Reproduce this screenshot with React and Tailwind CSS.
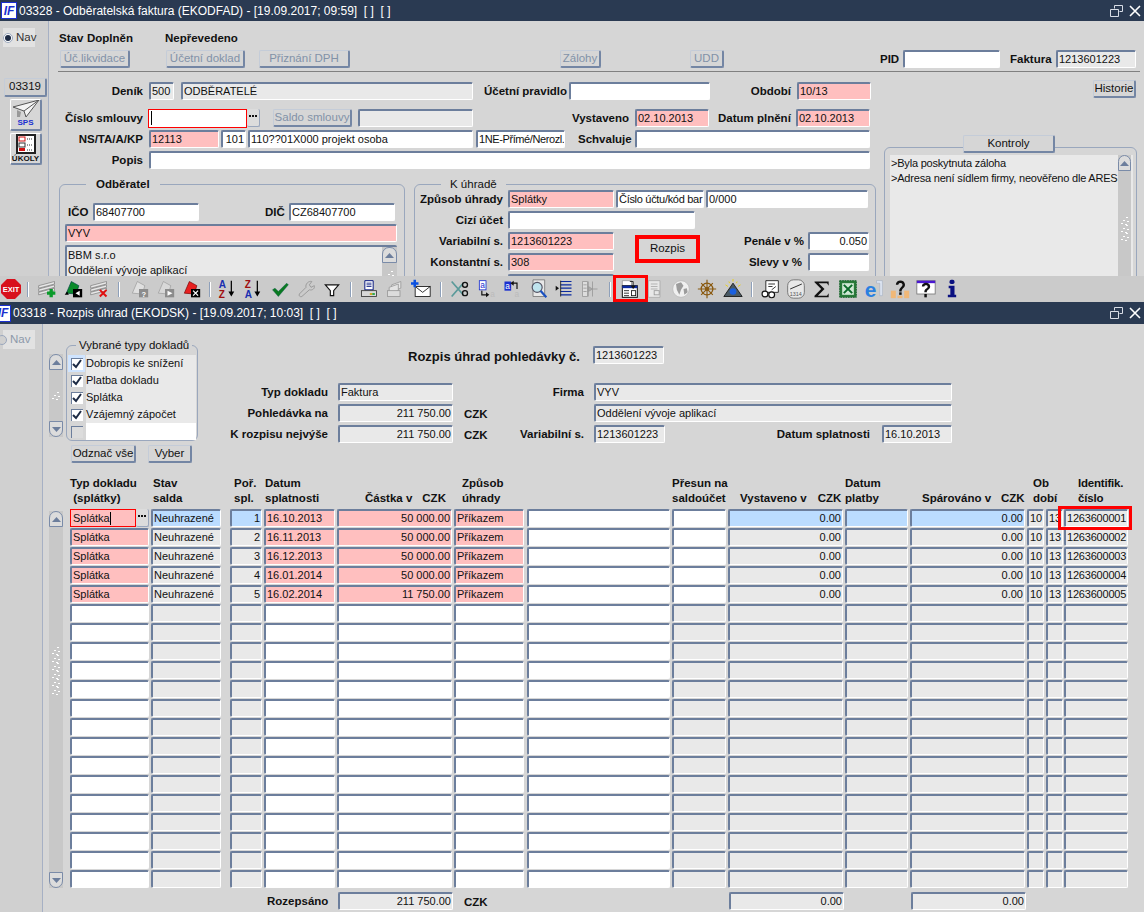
import React from "react";

const tones = {
    white: "bg-white",
    pink: "bg-[#ffbfbf]",
    grey: "bg-[#e9e9e9]",
    blue: "bg-[#bbdcff]",
};

const Field = ({tone = "white", right, className = "", children}) => (
    <div className={`h-[18px] shrink-0 overflow-hidden whitespace-nowrap rounded-[2px] border-t-2 border-l-2 border-r border-b border-t-[#6c7e9c] border-l-[#6c7e9c] border-r-white border-b-white pl-[1px] pr-[1px] text-[11px] leading-[14px] text-[#111] ${tones[tone]} ${right ? "text-right" : ""} ${className}`}>
        {children}
    </div>
);

const Label = ({className = "", children}) => (
    <div className={`shrink-0 whitespace-nowrap text-[11.5px] font-bold leading-[18px] text-[#111] ${className.includes("flex") ? "" : "text-right"} ${className}`}>{children}</div>
);

const Btn = ({disabled, className = "", children}) => (
    <div className={`flex h-[18px] shrink-0 items-center justify-center rounded-[2px] border border-r-2 border-b-2 border-white border-r-[#7486a4] border-b-[#7486a4] border-t-[#c4ccd8] border-l-[#c4ccd8] text-[11.5px] whitespace-nowrap ${disabled ? "text-[#8292a8]" : "text-[#111]"} ${className}`}>
        {children}
    </div>
);

const Dots = () => (
    <div className="flex h-[18px] w-[13px] shrink-0 items-center justify-center gap-[1px] rounded-[2px] border-r border-b border-[#9aa7bd] bg-[#dcdcdc] pb-[3px]">
        <span className="h-[2px] w-[2px] bg-[#111]" />
        <span className="h-[2px] w-[2px] bg-[#111]" />
        <span className="h-[2px] w-[2px] bg-[#111]" />
    </div>
);

const Grip = () => (
    <svg width="8" height="8" viewBox="0 0 8 8" className="shrink-0">
        <rect x="5" y="0" width="2" height="1" fill="#fff" />
        <rect x="2" y="3" width="2" height="1" fill="#fff" />
        <rect x="6" y="4" width="2" height="1" fill="#fff" />
        <rect x="0" y="6" width="2" height="1" fill="#fff" />
        <rect x="4" y="7" width="2" height="1" fill="#fff" />
    </svg>
);

const ScrollBtn = ({down}) => (
    <div className={`flex h-[16px] w-full shrink-0 items-center justify-center border border-[#7a8ba8] bg-[#dcdcdc] ${down ? "rounded-b-[7px]" : "rounded-t-[7px]"}`}>
        <svg width="9" height="5" viewBox="0 0 9 5">
            <path d={down ? "M0 0h9L4.5 5z" : "M4.5 0L9 5H0z"} fill="#6c7e9c" />
        </svg>
    </div>
);

const Scroll = ({className = "", trackClass = "", grips = 1, noDown}) => (
    <div className={`flex shrink-0 flex-col bg-[#c8c8c8] ${className}`}>
        <ScrollBtn />
        <div className={`flex flex-1 flex-col items-center justify-center ${trackClass}`}>
            {Array.from({length: grips}).map((_, i) => <Grip key={i} />)}
        </div>
        {!noDown && <ScrollBtn down />}
    </div>
);

const Group = ({label, labelClass, className = "", children}) => (
    <div className={`relative rounded-t-[6px] border border-[#9aa7bd] ${className}`}>
        <div className={`absolute top-[-9px] bg-[#d6d6d6] text-[11.5px] leading-[16px] text-[#111] ${labelClass}`}>{label}</div>
        {children}
    </div>
);

const Logo = () => (
    <div className="flex h-[17px] w-[16px] items-center justify-center border border-[#1a2fd0] bg-white text-[12px] font-bold italic leading-none text-[#1a2fd0]">IF</div>
);

const TitleBar = ({logoClass = "", className = "", children}) => (
    <div className={`flex shrink-0 items-center bg-[#2a3a52] text-[12px] text-white ${className}`}>
        <div className={logoClass}><Logo /></div>
        <span className="ml-[2px] whitespace-pre">{children}</span>
        <svg width="14" height="12" viewBox="0 0 14 12" className="ml-auto">
            <path d="M4.5 3.5V.5h8v6h-3M.5 4.500h8v7h-8z" fill="none" stroke="#d8dde6" />
        </svg>
        <svg width="12" height="12" viewBox="0 0 12 12" className="ml-[5px] mr-[3px]">
            <path d="M1 1l10 10M11 1L1 11" stroke="#fff" strokeWidth="1.600" />
        </svg>
    </div>
);

const Radio = ({off}) => (
    <div className={`ml-[3px] flex h-[19px] w-[32px] items-center bg-[#e2e2e2] text-[11.5px] ${off ? "text-[#8d99aa]" : "text-[#333]"}`}>
        <span className={`mr-[3px] flex h-[10px] w-[10px] shrink-0 items-center justify-center rounded-full border border-[#9aa7bd] ${off ? "-ml-[6px] bg-[#d0d0d0]" : "bg-white"}`}>
            {!off && <span className="h-[6px] w-[6px] rounded-full bg-[#1c2a44]" />}
        </span>
        Nav
    </div>
);

/* toolbar icons, drawn roughly like the old 16 colour bitmaps */
const Ic = ({children}) => (
    <div className="flex h-[26px] w-[26px] shrink-0 items-center justify-center">
        <svg width="20" height="20" viewBox="0 0 24 24">{children}</svg>
    </div>
);

const Rows = ({c = "#777"}) => (
    <g>
        <path d="M2 8L21 3v3L2 11zM2 12l19-5v3L2 15zM2 16l19-5v3L2 19z" fill="#e8e8e8" stroke={c} strokeWidth=".8" />
    </g>
);

const Card = ({fill, edge}) => (
    <path d="M4 17L10 3l9 5-3 10z" fill={fill} stroke={edge} strokeWidth=".8" />
);

const Box = ({fill = "#000", children}) => (
    <g>
        <rect x="12" y="12" width="11" height="10" fill={fill} />
        {children}
    </g>
);

const AZ = ({first, second, c1, c2}) => (
    <g>
        <text x="1" y="11" fontSize="12" fontWeight="bold" fill={c1} fontFamily="Liberation Sans">{first}</text>
        <text x="1" y="23" fontSize="12" fontWeight="bold" fill={c2} fontFamily="Liberation Sans">{second}</text>
        <path d="M16 2v15" stroke="#000" strokeWidth="1.500" />
        <path d="M12.500 15h7L16 21z" fill="#000" />
    </g>
);

const icons = {
    add: <><Rows /><path d="M15 12h4v3h3v4h-3v3h-4v-3h-3v-4h3z" fill="#0a9a2a" /></>,
    green: <><Card fill="#0a8a2a" edge="#044" /><path d="M2 19l3-4 2 4z" fill="#000" /><Box><path d="M20 14v6l-5-3z" fill="#fff" /></Box></>,
    del: <><Rows /><path d="M13 13l8 8M21 13l-8 8" stroke="#e01010" strokeWidth="2.400" /></>,
    qgrey: <><Card fill="#e0e0e0" edge="#999" /><Box fill="#8c8c8c"><text x="15" y="21" fontSize="9" fontWeight="bold" fill="#fff" fontFamily="Liberation Sans">?</text></Box></>,
    play: <><Card fill="#d8d8d8" edge="#999" /><Box fill="#8c8c8c"><path d="M15 14l6 3-6 3z" fill="#fff" /></Box></>,
    redx: <><Card fill="#e82020" edge="#700" /><Box><path d="M14.500 14l6 6M20.500 14l-6 6" stroke="#fff" strokeWidth="1.500" /></Box></>,
    az: <AZ first="A" second="Z" c1="#1a2fb0" c2="#a01010" />,
    za: <AZ first="Z" second="A" c1="#a01010" c2="#1a2fb0" />,
    check: <path d="M3 13l3-2 4 4L20 5l2 2-12 14z" fill="#0a7a20" stroke="#054" strokeWidth=".5" />,
    wrench: <path d="M19 3l-3 4 2 3 4-2c1 3-2 6-6 5L7 21c-2 1-4-1-3-3l8-8c-1-4 3-8 7-7z" fill="none" stroke="#9c9c9c" strokeWidth="1.200" />,
    filter: <path d="M4 7h16l-6 7v6h-4v-6z" fill="#fff" stroke="#111" strokeWidth="1.400" />,
    print: <><path d="M7 2h10v11H7z" fill="#fff" stroke="#0a1a80" strokeWidth="1.200" /><path d="M9 5h6M9 7h6M9 9h6" stroke="#0a1a80" /><rect x="3" y="14" width="18" height="7" fill="#d8d8d8" stroke="#333" /><rect x="13" y="17" width="3" height="2" fill="#d0a000" /><rect x="16" y="17" width="3" height="2" fill="#10a030" /></>,
    copyg: <><path d="M8 7l11-4v8l-11 4z" fill="#e4e4e4" stroke="#999" /><path d="M5 10l11-4v8l-11 4z" fill="#e4e4e4" stroke="#999" /><rect x="3" y="14" width="15" height="7" fill="#dcdcdc" stroke="#999" /></>,
    mail: <><rect x="5" y="9" width="18" height="12" fill="#fff" stroke="#111" /><path d="M5 9l9 7 9-7" fill="none" stroke="#111" /><path d="M3 1h3v3h3v3H6v3H3V7H0V4h3z" fill="#0a50e0" /></>,
    scissors: <><path d="M2 3l14 16M2 21L16 5" stroke="#5a9a9a" strokeWidth="2" /><circle cx="18" cy="7" r="3" fill="none" stroke="#111" strokeWidth="1.600" /><circle cx="18" cy="17" r="3" fill="none" stroke="#111" strokeWidth="1.600" /></>,
    adown: <><rect x="4" y="2" width="8" height="11" fill="#fff" stroke="#1a2fd0" /><text x="5" y="11" fontSize="10" fill="#1a2fd0" fontFamily="Liberation Sans">a</text><path d="M7 14v5h6" fill="none" stroke="#111" strokeWidth="1.400" /><path d="M12 16l4 3-4 3z" fill="#111" /><text x="17" y="22" fontSize="10" fill="#bbb" fontFamily="Liberation Sans">a</text></>,
    aleft: <><rect x="3" y="3" width="8" height="11" fill="#1a2fd0" /><text x="4" y="12" fontSize="10" fill="#fff" fontFamily="Liberation Sans">a</text><path d="M18 12V5h-5" fill="none" stroke="#111" strokeWidth="1.400" /><path d="M14 2l-4 3 4 3z" fill="#111" /><text x="15" y="22" fontSize="10" fill="#bbb" fontFamily="Liberation Sans">a</text></>,
    zoom: <><path d="M6 1h14v20H6z" fill="#e8e8e8" stroke="#777" /><circle cx="11" cy="10" r="6" fill="#bfe4ee" stroke="#556" strokeWidth="1.400" /><path d="M15 14l7 8" stroke="#1a50c0" strokeWidth="2.600" /></>,
    list: <><path d="M8 3h13M8 7h13M8 11h13M8 15h13M8 19h13" stroke="#0a2aa0" strokeWidth="1.400" /><path d="M8 2v19" stroke="#111" /><path d="M2 8l4 3-4 3z" fill="#111" /></>,
    listg: <><path d="M3 3h6v18H3zM4 7h4M4 11h4M4 15h4" fill="#ddd" stroke="#999" /><path d="M10 3v18M15 3v18M10 9l5 3-5 3zM15 12h6" fill="#aaa" stroke="#999" /></>,
    card: <><path d="M4 2h11v8H4z" fill="#fff" stroke="#999" /><rect x="4" y="8" width="18" height="14" fill="#fff" stroke="#111" strokeWidth="1.200" /><rect x="4" y="8" width="18" height="3" fill="#0a2aa0" /><path d="M13 3h4v6" fill="none" stroke="#111" /><path d="M14 8l3 4 3-4z" fill="#111" /><path d="M6 14h6M6 17h6M6 20h6" stroke="#111" /><rect x="15" y="14" width="5" height="6" fill="none" stroke="#111" /></>,
    doc: <><path d="M4 2h14v20H4z" fill="#e8e8e8" stroke="#aaa" /><path d="M7 6h8M7 9h8M7 12h8" stroke="#aaa" /><rect x="11" y="14" width="6" height="5" fill="none" stroke="#999" /></>,
    globe: <><circle cx="12" cy="12" r="10" fill="#f0f0f0" stroke="#bbb" /><path d="M6 6l6-2 3 4-3 5-2 6-3-6zM15 12l4-1 1 5-4 3z" fill="#9c9c9c" /></>,
    wheel: <><circle cx="12" cy="12" r="7" fill="none" stroke="#8a5a10" strokeWidth="1.600" /><circle cx="12" cy="12" r="2.500" fill="#8a5a10" /><path d="M12 1v22M1 12h22M5 5l14 14M19 5L5 19" stroke="#8a5a10" strokeWidth="1.400" /></>,
    tri: <><path d="M12 5L23 21H1z" fill="#4a5a64" stroke="#111" /><ellipse cx="12" cy="15" rx="4" ry="4" fill="#1a60e0" /><path d="M3 7l3 2M21 7l-3 2M12 0v3M7 3l1 2M17 3l-1 2" stroke="#e8d020" strokeWidth="1.200" /></>,
    glasses: <><path d="M7 2h15v14H7z" fill="#fff" stroke="#111" /><path d="M10 6h8M10 9h5M14 13l5-4" stroke="#111" /><circle cx="6" cy="18" r="3.500" fill="#fff" stroke="#111" strokeWidth="1.400" /><circle cx="14" cy="19" r="3.500" fill="#fff" stroke="#111" strokeWidth="1.400" /></>,
    clock: <><rect x="2" y="1" width="20" height="22" rx="7" fill="#e8e8e8" stroke="#666" /><path d="M5 12L19 6" stroke="#333" strokeWidth="1.200" /><text x="4.500" y="20" fontSize="6.500" fill="#555" fontFamily="Liberation Sans">1314</text></>,
    sigma: <path d="M3 3h17v5l-2-3H8l7 7-8 8h11l2-3v5H3v-2l8-8-8-8z" fill="#111" />,
    excel: <><rect x="2" y="2" width="20" height="20" fill="#2a7a3a" stroke="#0a5a20" strokeDasharray="2 1" /><rect x="5" y="5" width="14" height="14" fill="#cfe8d4" /><path d="M7 7l10 10M17 7L7 17" stroke="#0a6a28" strokeWidth="2.400" /></>,
    ie: <><path d="M15 2h7v18h-3V5h-4z" fill="#dfe6f2" stroke="#9aa7bd" strokeWidth=".6" /><text x="1" y="21" fontSize="25" fontWeight="bold" fill="#2a80e0" fontFamily="Liberation Sans">e</text></>,
    hpeople: <><path d="M7 7c0-7 11-7 11 0 0 4-4 4-4 8h-3c0-5 4-5 4-8 0-3-5-3-5 0z" fill="#111" /><rect x="11" y="16" width="3" height="3" fill="#111" /><rect x="1" y="14" width="6" height="9" fill="#f0b878" /><rect x="9" y="20" width="6" height="3" fill="#f0b878" /><rect x="17" y="14" width="6" height="9" fill="#f0b878" /></>,
    help: <><rect x="1" y="2" width="22" height="16" fill="#fff" stroke="#777" /><rect x="1" y="2" width="22" height="3" fill="#4a18d0" /><path d="M7 9c0-6 10-6 10 0 0 4-4 3-4 7h-3c0-5 4-4 4-7 0-2-4-2-4 0z" fill="#111" /><rect x="10" y="18" width="3" height="4" fill="#111" /></>,
    info: <><rect x="9" y="1" width="6" height="5" rx="2" fill="#0a1080" /><path d="M8 8h7v11h2v3H7v-3h3v-8H8z" fill="#0a1080" /></>,
};

const Sep = ({className}) => (
    <div className={`flex h-[26px] shrink-0 items-center justify-center ${className}`}>
        <div className="h-[15px] w-[2px] border-l border-[#8ea0ba] bg-white" />
    </div>
);

const Toolbar = () => (
    <div className="flex h-[26px] shrink-0 items-center bg-[#cbcbcb]">
        <div className="flex h-[26px] w-[21px] shrink-0 items-center justify-center">
            <svg width="20" height="20" viewBox="0 0 20 20">
                <path d="M6 0h8l6 6v8l-6 6H6l-6-6V6z" fill="#d8101c" />
                <text x="10" y="13" textAnchor="middle" fontSize="7.500" fontWeight="bold" fill="#fff" fontFamily="Liberation Sans">EXIT</text>
            </svg>
        </div>
        <Sep className="w-[13px]" />
        <Ic>{icons.add}</Ic><Ic>{icons.green}</Ic><Ic>{icons.del}</Ic>
        <Sep className="w-[14px]" />
        <Ic>{icons.qgrey}</Ic><Ic>{icons.play}</Ic><Ic>{icons.redx}</Ic>
        <Sep className="w-[11px]" />
        <Ic>{icons.az}</Ic><Ic>{icons.za}</Ic><Ic>{icons.check}</Ic><Ic>{icons.wrench}</Ic><Ic>{icons.filter}</Ic>
        <Sep className="w-[11px]" />
        <Ic>{icons.print}</Ic><Ic>{icons.copyg}</Ic><Ic>{icons.mail}</Ic>
        <Sep className="w-[13px]" />
        <Ic>{icons.scissors}</Ic><Ic>{icons.adown}</Ic><Ic>{icons.aleft}</Ic><Ic>{icons.zoom}</Ic><Ic>{icons.list}</Ic><Ic>{icons.listg}</Ic>
        <Sep className="w-[13px]" />
        <div className="relative">
            <Ic>{icons.card}</Ic>
            <div className="absolute left-[-3px] top-[-1px] h-[27px] w-[35px] border-[3px] border-[#f00]" />
        </div>
        <Ic>{icons.doc}</Ic><Ic>{icons.globe}</Ic><Ic>{icons.wheel}</Ic><Ic>{icons.tri}</Ic>
        <Sep className="w-[11px]" />
        <Ic>{icons.glasses}</Ic><Ic>{icons.clock}</Ic><Ic>{icons.sigma}</Ic><Ic>{icons.excel}</Ic><Ic>{icons.ie}</Ic><Ic>{icons.hpeople}</Ic><Ic>{icons.help}</Ic><Ic>{icons.info}</Ic>
    </div>
);

const NavTop = () => (
    <div className="flex w-[49px] shrink-0 flex-col border-r border-[#a6b0c4] bg-[#d0d0d0] pt-[7px]">
        <Radio />
        <Btn className="ml-[4px] mt-[31px] h-[19px] w-[43px] border-[#c4ccd8]">03319</Btn>
        <div className="ml-[10px] mt-[2px] flex h-[32px] w-[32px] flex-col items-center rounded-[2px] border border-r-2 border-b-2 border-white border-r-[#7486a4] border-b-[#7486a4] bg-[#d6d6d6]">
            <svg width="28" height="19" viewBox="0 0 28 19">
                <path d="M1 7l26-7-13 17-2-6z" fill="#f4f4f4" stroke="#555" />
                <path d="M12 11l15-11" stroke="#555" />
                <path d="M5 10v7h3l1-5" fill="#999" />
            </svg>
            <span className="text-[8px] font-bold leading-[8px] text-[#1a2fd0]">SPS</span>
        </div>
        <div className="ml-[10px] mt-[2px] flex h-[32px] w-[32px] flex-col items-center rounded-[2px] border border-r-2 border-b-2 border-white border-r-[#7486a4] border-b-[#7486a4] bg-[#d6d6d6]">
            <svg width="22" height="20" viewBox="0 0 22 20">
                <rect x="1" y="0" width="20" height="20" fill="#222" />
                <rect x="3" y="2" width="16" height="16" fill="#fff" />
                <rect x="4" y="3" width="6" height="4" fill="#fff" stroke="#d01010" />
                <rect x="4" y="9" width="6" height="4" fill="#fff" stroke="#333" />
                <rect x="4" y="14" width="6" height="3" fill="#d01010" />
                <path d="M12 5h6M12 11h6M12 16h6" stroke="#333" strokeDasharray="1 1" />
            </svg>
            <span className="text-[8px] font-bold leading-[9px] text-[#111]">ÚKOLY</span>
        </div>
    </div>
);

const TopWindow = () => (
    <div className="flex h-[255px] shrink-0 overflow-hidden">
        <NavTop />
        <div className="min-w-0 flex-1">
            <div className="ml-[10px] mt-[9px] flex h-[16px] text-[11.5px] font-bold leading-[16px] text-[#111]">
                <span className="w-[28px]">Stav</span>
                <span className="w-[78px]">Doplněn</span>
                <span>Nepřevedeno</span>
            </div>
            <div className="mt-[4px] flex h-[18px] items-center pr-[8px]">
                <Btn disabled className="ml-[11px] w-[70px]">Úč.likvidace</Btn>
                <Btn disabled className="ml-[36px] w-[79px]">Účetní doklad</Btn>
                <Btn disabled className="ml-[14px] w-[91px]">Přiznání DPH</Btn>
                <Btn disabled className="ml-[210px] w-[41px]">Zálohy</Btn>
                <Btn disabled className="ml-[89px] w-[34px]">UDD</Btn>
                <Label className="ml-[156px] w-[17px]">PID</Label>
                <Field className="ml-[6px] w-[97px]" />
                <Label className="ml-[10px] w-[40px]">Faktura</Label>
                <Field tone="grey" className="ml-[6px] w-[80px]">1213601223</Field>
            </div>
            <div className="ml-[9px] mr-[4px] mt-[3px] h-[2px] border-t border-[#808080] border-b-white" />
            <div className="flex">
                <div className="w-[827px] shrink-0">
                    <div className="mt-[9px] flex h-[18px] items-center">
                        <Label className="w-[94px]">Deník</Label>
                        <Field tone="grey" className="ml-[6px] w-[25px]">500</Field>
                        <Field tone="grey" className="ml-[7px] w-[292px]">ODBĚRATELÉ</Field>
                        <Label className="ml-[11px] w-[81px]">Účetní pravidlo</Label>
                        <Field className="ml-[4px] w-[141px]" />
                        <Label className="ml-[10px] w-[71px]">Období</Label>
                        <Field tone="pink" className="ml-[6px] w-[74px]">10/13</Field>
                    </div>
                    <div className="mt-[9px] flex h-[18px] items-center">
                        <Label className="w-[94px]">Číslo smlouvy</Label>
                        <div className="ml-[5px] flex h-[19px] w-[99px] shrink-0 items-center border border-[#f00] bg-white pl-[2px]">
                            <div className="h-[14px] w-[1px] bg-black" />
                        </div>
                        <Dots />
                        <Btn disabled className="ml-[13px] w-[79px]">Saldo smlouvy</Btn>
                        <Field tone="grey" className="ml-[6px] w-[115px]" />
                        <Label className="ml-[98px] w-[58px]">Vystaveno</Label>
                        <Field tone="pink" className="ml-[6px] w-[74px]">02.10.2013</Field>
                        <Label className="ml-[9px] w-[72px]">Datum plnění</Label>
                        <Field tone="pink" className="ml-[6px] w-[74px]">02.10.2013</Field>
                    </div>
                    <div className="mt-[3px] flex h-[18px] items-center">
                        <Label className="w-[94px]">NS/TA/A/KP</Label>
                        <Field tone="pink" className="ml-[6px] w-[70px]">12113</Field>
                        <Field className="ml-[2px] w-[25px] text-right">101</Field>
                        <Field className="ml-[2px] w-[225px]">110??01X000 projekt osoba</Field>
                        <Field className="ml-[3px] w-[89px] tracking-[-0.4px]">1NE-Přímé/Nerozl.</Field>
                        <Label className="ml-[13px] w-[51px]">Schvaluje</Label>
                        <Field className="ml-[6px] w-[235px]" />
                    </div>
                    <div className="mt-[3px] flex h-[18px] items-center">
                        <Label className="w-[94px]">Popis</Label>
                        <Field className="ml-[6px] w-[721px]" />
                    </div>
                    <div className="mt-[15px] flex">
                        <Group label="Odběratel" labelClass="left-[26px] px-[10px] font-bold" className="ml-[10px] h-[100px] w-[346px]">
                            <div className="mt-[18px] flex items-center">
                                <Label className="ml-[8px] w-[19px]">IČO</Label>
                                <Field className="ml-[6px] w-[106px]">68407700</Field>
                                <Label className="ml-[66px] w-[18px]">DIČ</Label>
                                <Field className="ml-[6px] w-[106px]">CZ68407700</Field>
                            </div>
                            <Field tone="pink" className="ml-[5px] mt-[3px] w-[332px]">VYV</Field>
                            <div className="ml-[5px] mt-[3px] flex h-[40px] w-[332px] rounded-[2px] border-t-2 border-l-2 border-t-[#6c7e9c] border-l-[#6c7e9c] bg-[#e9e9e9] pl-[1px] text-[11px] leading-[15px] text-[#111]">
                                <div className="flex-1 pt-[1px]">BBM s.r.o<br />Oddělení vývoje aplikací</div>
                                <Scroll className="h-[40px] w-[15px]" noDown />
                            </div>
                        </Group>
                        <Group label="K úhradě" labelClass="left-[26px] px-[9px]" className="ml-[9px] h-[100px] w-[462px]">
                            <div className="mt-[5px] flex h-[18px] items-center">
                                <Label className="ml-[4px] w-[84px]">Způsob úhrady</Label>
                                <Field tone="pink" className="ml-[5px] w-[106px]">Splátky</Field>
                                <Field className="ml-[2px] w-[88px] tracking-[-0.3px]">Číslo účtu/kód bar</Field>
                                <Field className="ml-[2px] w-[162px]">0/000</Field>
                            </div>
                            <div className="mt-[3px] flex h-[18px] items-center">
                                <Label className="ml-[4px] w-[84px]">Cizí účet</Label>
                                <Field className="ml-[5px] w-[187px]" />
                            </div>
                            <div className="flex">
                                <div className="w-[199px] shrink-0">
                                    <div className="mt-[3px] flex h-[18px] items-center">
                                        <Label className="ml-[4px] w-[84px]">Variabilní s.</Label>
                                        <Field tone="pink" className="ml-[5px] w-[106px]">1213601223</Field>
                                    </div>
                                    <div className="mt-[3px] flex h-[18px] items-center">
                                        <Label className="ml-[4px] w-[84px]">Konstantní s.</Label>
                                        <Field tone="pink" className="ml-[5px] w-[106px]">308</Field>
                                    </div>
                                    <Field className="ml-[93px] mt-[3px] w-[106px]" />
                                </div>
                                <div className="ml-[21px] mt-[6px] flex h-[28px] w-[65px] shrink-0 items-center justify-center border-[4px] border-[#f00] bg-[#d6d6d6] text-[11.5px] text-[#111]">Rozpis</div>
                                <div className="w-[169px] shrink-0">
                                    <div className="mt-[3px] flex h-[18px] items-center">
                                        <Label className="ml-[44px] w-[58px]">Penále v %</Label>
                                        <Field right className="ml-[6px] w-[61px]">0.050</Field>
                                    </div>
                                    <div className="mt-[3px] flex h-[18px] items-center">
                                        <Label className="ml-[44px] w-[58px]">Slevy v %</Label>
                                        <Field className="ml-[6px] w-[61px]" />
                                    </div>
                                </div>
                            </div>
                        </Group>
                    </div>
                </div>
                <div className="ml-[8px] w-[253px] shrink-0">
                    <div className="flex justify-end">
                        <Btn className="mr-[1px] mt-[7px] w-[43px]">Historie</Btn>
                    </div>
                    <div className="relative mt-[49px] h-[140px] rounded-t-[6px] border border-[#9aa7bd]">
                        <Btn className="absolute left-[78px] top-[-13px] w-[92px] bg-[#d6d6d6]">Kontroly</Btn>
                        <div className="ml-[5px] mt-[7px] flex h-[132px] w-[243px] bg-[#e9e9e9] text-[11px] leading-[15px] text-[#111]">
                            <div className="w-[228px] overflow-hidden whitespace-nowrap pl-[1px] pt-[1px] tracking-[-0.2px]">&gt;Byla poskytnuta záloha<br />&gt;Adresa není sídlem firmy, neověřeno dle ARES</div>
                            <Scroll className="h-[132px] w-[13px]" grips={3} noDown />
                        </div>
                    </div>
                </div>
            </div>
        </div>
    </div>
);

/* w + ml of every table column, tone for the empty rows */
const cols = [
    {c: "w-[79px]", e: "white", h: "pl-0"},
    {c: "ml-[2px] w-[70px]", e: "grey", h: "pl-[2px]"},
    {c: "ml-[9px] w-[32px]", e: "grey", right: true, h: "pl-[4px]"},
    {c: "ml-[2px] w-[71px]", e: "white", h: "pl-[1px]"},
    {c: "ml-[2px] w-[115px]", e: "white", right: true, h: "pl-[28px]"},
    {c: "ml-[2px] w-[70px]", e: "white", h: "pl-[8px]"},
    {c: "ml-[3px] w-[143px]", e: "white", h: ""},
    {c: "ml-[2px] w-[54px]", e: "grey", h: ""},
    {c: "ml-[2px] w-[115px]", e: "grey", right: true, h: "pl-[12px]"},
    {c: "ml-[2px] w-[63px]", e: "grey", h: ""},
    {c: "ml-[2px] w-[115px]", e: "grey", right: true, h: "pl-[12px]"},
    {c: "ml-[2px] w-[17px]", e: "grey", h: "pl-[6px]"},
    {c: "ml-[2px] w-[17px]", e: "grey", h: ""},
    {c: "ml-[1px] w-[64px] tracking-[-0.2px]", e: "grey", h: "pl-[14px]"},
];

const heads = [
    ["Typ dokladu", "\u00a0(splátky)"],
    ["Stav", "salda"],
    ["Poř.", "spl."],
    ["Datum", "splatnosti"],
    ["", <span key="a">Částka v<span className="ml-[10px]">CZK</span></span>],
    ["Způsob", "úhrady"],
    ["", ""],
    ["Přesun na", "saldoúčet"],
    ["", <span key="b">Vystaveno v<span className="ml-[11px]">CZK</span></span>],
    ["Datum", "platby"],
    ["", <span key="c">Spárováno v<span className="ml-[10px]">CZK</span></span>],
    ["Ob", "dobí"],
    ["", ""],
    ["Identifik.", "číslo"],
];

const rows = [
    ["1", "16.10.2013", "50 000.00", "1263600001"],
    ["2", "16.11.2013", "50 000.00", "1263600002"],
    ["3", "16.12.2013", "50 000.00", "1263600003"],
    ["4", "16.01.2014", "50 000.00", "1263600004"],
    ["5", "16.02.2014", "11 750.00", "1263600005"],
];

const Row = ({index}) => {
    const row = rows[index]
    if(!row){
        return (
            <div className="flex h-[19px]">
                {cols.map((col, i) => <Field key={i} tone={col.e} className={col.c} />)}
            </div>
        )
    }
    const first = index === 0
    const values = ["Splátka", "Neuhrazené", row[0], row[1], row[2], "Příkazem", "", "", "0.00", "", "0.00", "10", "13", row[3]]
    const rowTones = ["pink", first ? "blue" : "grey", first ? "blue" : "grey", "pink", "pink", "pink", "white", "white", first ? "blue" : "grey", first ? "blue" : "grey", first ? "blue" : "grey", "grey", "grey", "grey"]
    return (
        <div className="flex h-[19px]">
            {cols.map((col, i) => {
                if(first && i === 0){
                    return (
                        <div key={i} className="flex h-[18px] w-[79px] shrink-0">
                            <div className="flex w-[66px] items-center border border-[#f00] bg-[#ffbfbf] pl-[2px] text-[11px] text-[#111]">
                                Splátka<span className="h-[13px] w-[1px] bg-black" />
                            </div>
                            <Dots />
                        </div>
                    )
                }
                if(first && i === 13){
                    return (
                        <div key={i} className={`relative ${col.c}`}>
                            <Field tone="grey" className="w-full">{values[i]}</Field>
                            <div className="absolute bottom-[-2px] left-[-6px] right-[-4px] top-[-3px] border-[3px] border-[#f00]" />
                        </div>
                    )
                }
                return <Field key={i} tone={rowTones[i]} right={col.right} className={col.c}>{values[i]}</Field>
            })}
        </div>
    )
};

const CheckRow = ({label, on, blue, white}) => (
    <div className="flex h-[17px] items-center">
        <div className={`flex h-[17px] w-[17px] shrink-0 items-center justify-center ${blue ? "bg-[#cfe4ff]" : ""}`}>
            <div className={`flex h-[12px] w-[12px] items-center justify-center border-t border-l border-[#6c7e9c] ${on ? "bg-white" : "bg-[#dcdcdc]"}`}>
                {on && (
                    <svg width="10" height="10" viewBox="0 0 10 10">
                        <path d="M1 5l3 3 5-7" fill="none" stroke="#1c2a44" strokeWidth="2" />
                    </svg>
                )}
            </div>
        </div>
        <div className={`ml-[1px] h-[17px] w-[110px] text-[11px] leading-[17px] text-[#111] ${white ? "bg-white" : "bg-[#e9e9e9]"}`}>{label}</div>
    </div>
);

const BottomWindow = () => (
    <div className="flex min-h-0 flex-1">
        <div className="w-[43px] shrink-0 border-r border-[#a6b0c4] bg-[#d0d0d0] pt-[6px]">
            <Radio off />
        </div>
        <div className="min-w-0 flex-1">
            <div className="flex">
                <div className="w-[156px] shrink-0">
                    <div className="mt-[21px] flex">
                        <Scroll className="ml-[6px] mt-[9px] h-[83px] w-[14px]" />
                        <Group label="Vybrané typy dokladů" labelClass="left-[9px] px-[3px]" className="ml-[3px] h-[96px] w-[132px] rounded-b-[6px]">
                            <div className="ml-[1px] mt-[9px]">
                                <CheckRow label="Dobropis ke snížení" on blue />
                                <CheckRow label="Platba dokladu" on />
                                <CheckRow label="Splátka" on />
                                <CheckRow label="Vzájemný zápočet" on />
                                <CheckRow label="" white />
                            </div>
                        </Group>
                    </div>
                    <div className="mt-[4px] flex">
                        <Btn className="ml-[28px] w-[65px]">Odznač vše</Btn>
                        <Btn className="ml-[12px] w-[44px]">Vyber</Btn>
                    </div>
                </div>
                <div className="shrink-0">
                    <div className="mt-[22px] flex h-[18px] items-center">
                        <div className="ml-[209px] w-[175px] whitespace-nowrap pt-[3px] text-[13px] font-bold text-[#111]">Rozpis úhrad pohledávky č.</div>
                        <Field tone="grey" className="ml-[10px] w-[71px]">1213601223</Field>
                    </div>
                    <div className="mt-[19px] flex h-[18px] items-center">
                        <Label className="w-[129px]">Typ dokladu</Label>
                        <Field tone="grey" className="ml-[10px] w-[115px]">Faktura</Field>
                        <Label className="w-[131px]">Firma</Label>
                        <Field tone="grey" className="ml-[10px] w-[358px]">VYV</Field>
                    </div>
                    <div className="mt-[3px] flex h-[18px] items-center">
                        <Label className="w-[129px]">Pohledávka na</Label>
                        <Field tone="grey" right className="ml-[10px] w-[115px]">211 750.00</Field>
                        <Label className="flex w-[131px] pl-[11px]">
                            <span className="pt-[1px]">CZK</span>
                        </Label>
                        <Field tone="grey" className="ml-[10px] w-[358px]">Oddělení vývoje aplikací</Field>
                    </div>
                    <div className="mt-[3px] flex h-[18px] items-center">
                        <Label className="w-[129px]">K rozpisu nejvýše</Label>
                        <Field tone="grey" right className="ml-[10px] w-[115px]">211 750.00</Field>
                        <Label className="flex w-[131px] justify-between pl-[11px]">
                            <span className="pt-[1px]">CZK</span><span>Variabilní s.</span>
                        </Label>
                        <Field tone="grey" className="ml-[10px] w-[71px]">1213601223</Field>
                        <Label className="w-[205px]">Datum splatnosti</Label>
                        <Field tone="grey" className="ml-[12px] w-[70px]">16.10.2013</Field>
                    </div>
                </div>
            </div>
            <div className="ml-[27px] mt-[13px] flex h-[33px]">
                {cols.map((col, i) => (
                    <div key={i} className={`shrink-0 whitespace-nowrap text-[11.5px] font-bold leading-[15px] text-[#111] ${col.c} ${col.h}`}>
                        <div className="h-[15px]">{heads[i][0]}</div>
                        <div>{heads[i][1]}</div>
                    </div>
                ))}
            </div>
            <div className="flex">
                <Scroll className="ml-[6px] mt-[2px] h-[377px] w-[14px]" trackClass="pb-[58px]" grips={6} />
                <div className="ml-[7px]">
                    {Array.from({length: 20}).map((_, i) => <Row key={i} index={i} />)}
                </div>
            </div>
            <div className="mt-[3px] flex h-[18px] items-center">
                <Label className="ml-[224px] w-[61px]">Rozepsáno</Label>
                <Field tone="grey" right className="ml-[10px] w-[115px]">211 750.00</Field>
                <Label className="ml-[11px] w-[21px] pt-[1px]">CZK</Label>
                <Field tone="grey" right className="ml-[244px] w-[115px]">0.00</Field>
                <Field tone="grey" right className="ml-[67px] w-[115px]">0.00</Field>
            </div>
        </div>
    </div>
);

const App = () => {
    return (
        <div className="flex h-[912px] w-[1144px] flex-col overflow-hidden bg-[#d6d6d6] font-['Liberation_Sans',Arial,sans-serif]">
            <TitleBar logoClass="ml-[1px]" className="h-[21px]">03328 - Odběratelská faktura (EKODFAD) - [19.09.2017; 09:59]  [ ]  [ ]</TitleBar>
            <TopWindow />
            <Toolbar />
            <TitleBar logoClass="-ml-[5px]" className="h-[22px]">03318 - Rozpis úhrad (EKODSK) - [19.09.2017; 10:03]  [ ]  [ ]</TitleBar>
            <BottomWindow />
        </div>
    )
}

export default App
